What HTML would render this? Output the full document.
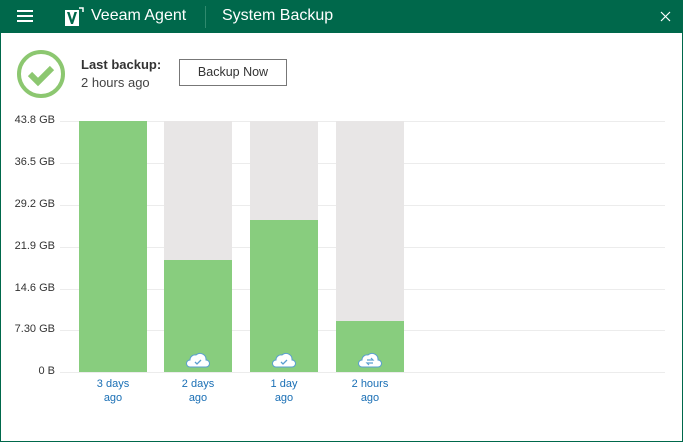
<!DOCTYPE html><html><head><style>
body{margin:0;width:683px;height:442px;overflow:hidden;font-family:"Liberation Sans",sans-serif;background:#fff;position:relative}
.frame{position:absolute;left:0;top:0;width:681px;height:440px;border:1px solid #00684b}
.hdr{position:absolute;left:0;top:0;width:683px;height:33px;background:#00684b;color:#fff}
.t{position:absolute;font-size:16px;top:7px}
.ax{position:absolute;right:628px;font-size:11px;color:#333;text-align:right;white-space:nowrap}
.gl{position:absolute;left:60px;width:605px;height:1px;background:#ececec}
.bar{position:absolute;top:121px;height:251px;width:68px;background:#e8e6e6}
.g{position:absolute;left:0;bottom:0;width:100%;background:#88cd7e}
.lb{position:absolute;top:377px;width:68px;text-align:center;font-size:11px;color:#1a6fb5;line-height:14px}
.c{position:absolute;left:22px;bottom:4px}
</style></head><body>
<div class="frame"></div>
<div class="hdr">
<div style="position:absolute;left:17px;top:10px;width:16px;height:2px;background:#fff;box-shadow:0 5px 0 #fff,0 10px 0 #fff"></div>
<svg style="position:absolute;left:64px;top:7px" width="20" height="20" viewBox="0 0 20 20"><path d="M1 3h14v16H1z" fill="#fff"/><path d="M15 1h4v4" fill="none" stroke="#fff" stroke-width="1.5"/><path d="M3 5l4 12h2l4-12h-2.5l-2.5 8-2.5-8z" fill="#00684b"/></svg>
<div class="t" style="left:91px">Veeam Agent</div>
<div style="position:absolute;left:205px;top:6px;width:1px;height:22px;background:#2f8a6e"></div>
<div class="t" style="left:222px">System Backup</div>
<svg style="position:absolute;left:660px;top:11px" width="11" height="11" viewBox="0 0 11 11"><path d="M1 1l9 9M10 1l-9 9" stroke="#fff" stroke-width="1.2"/></svg>
</div>
<svg style="position:absolute;left:16px;top:49px" width="50" height="50" viewBox="0 0 50 50"><circle cx="25" cy="25" r="22" fill="none" stroke="#8cc770" stroke-width="4"/><path d="M14 25l8 8 14-14" fill="none" stroke="#8cc770" stroke-width="6"/></svg>
<div style="position:absolute;left:81px;top:57px;font-size:13px;font-weight:bold;color:#333">Last backup:</div>
<div style="position:absolute;left:81px;top:75px;font-size:13px;color:#444">2 hours ago</div>
<div style="position:absolute;left:179px;top:59px;width:106px;height:25px;border:1px solid #777;font-size:12.5px;color:#333;text-align:center;line-height:25px">Backup Now</div>
<div class="gl" style="top:121px"></div><div class="gl" style="top:163px"></div><div class="gl" style="top:205px"></div><div class="gl" style="top:247px"></div><div class="gl" style="top:289px"></div><div class="gl" style="top:330px"></div><div class="gl" style="top:372px"></div>
<div class="ax" style="top:114px">43.8 GB</div><div class="ax" style="top:156px">36.5 GB</div><div class="ax" style="top:198px">29.2 GB</div><div class="ax" style="top:240px">21.9 GB</div><div class="ax" style="top:282px">14.6 GB</div><div class="ax" style="top:323px">7.30 GB</div><div class="ax" style="top:365px">0 B</div>
<div class="bar" style="left:79px"><div class="g" style="height:251px"></div></div>
<div class="bar" style="left:164px"><div class="g" style="height:112px"></div><svg class="c" width="24" height="16" viewBox="0 0 24 16"><path d="M4 15a3.5 3.5 0 0 1 0-7a5 5 0 0 1 6-5a6 6 0 0 1 10 5a3.5 3.5 0 0 1 0 7z" fill="#fff" stroke="#5a9fd0" stroke-width="1"/><path d="M9 10l2 2 4-4" fill="none" stroke="#5a9fd0" stroke-width="1.3"/></svg></div>
<div class="bar" style="left:250px"><div class="g" style="height:152px"></div><svg class="c" width="24" height="16" viewBox="0 0 24 16"><path d="M4 15a3.5 3.5 0 0 1 0-7a5 5 0 0 1 6-5a6 6 0 0 1 10 5a3.5 3.5 0 0 1 0 7z" fill="#fff" stroke="#5a9fd0" stroke-width="1"/><path d="M9 10l2 2 4-4" fill="none" stroke="#5a9fd0" stroke-width="1.3"/></svg></div>
<div class="bar" style="left:336px"><div class="g" style="height:51px"></div><svg class="c" width="24" height="16" viewBox="0 0 24 16"><path d="M4 15a3.5 3.5 0 0 1 0-7a5 5 0 0 1 6-5a6 6 0 0 1 10 5a3.5 3.5 0 0 1 0 7z" fill="#fff" stroke="#5a9fd0" stroke-width="1"/><path d="M9 8h6l-2-2M15 11H9l2 2" fill="none" stroke="#5a9fd0" stroke-width="1.2"/></svg></div>
<div class="lb" style="left:79px">3 days<br>ago</div><div class="lb" style="left:164px">2 days<br>ago</div><div class="lb" style="left:250px">1 day<br>ago</div><div class="lb" style="left:336px">2 hours<br>ago</div>
</body></html>
